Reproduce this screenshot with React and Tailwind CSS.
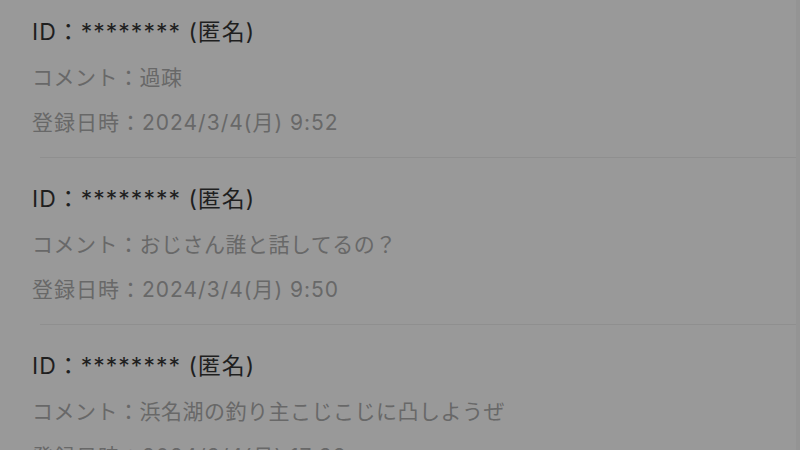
const comments = [
  { text: '過疎', date: '2024/3/4(月) 9:52' },
  { text: 'おじさん誰と話してるの？', date: '2024/3/4(月) 9:50' },
  { text: '浜名湖の釣り主こじこじに凸しようぜ', date: '2024/3/4(月) 17:38' },
]

export default function App() {
  return (
    <div
      className="w-[800px] h-[450px] overflow-hidden bg-[#999999] flex"
      style={{ fontFamily: 'Inter, "Noto Sans CJK JP", sans-serif' }}
    >
      <div className="flex-1 -mt-[9px]">
        {comments.map((c, i) => (
          <div key={i}>
            <div className="pl-8 pt-[19px] pb-[12px]">
              <div className="h-[45px] flex items-center text-[23px] tracking-[1px] text-[#1f1f1f]">
                ID：******** (匿名)
              </div>
              <div className="h-[45px] flex items-center text-[21px] tracking-[0.5px] text-[#686868]">
                コメント：{c.text}
              </div>
              <div className="h-[45px] flex items-center text-[21px] tracking-[1px] text-[#686868]">
                登録日時：{c.date}
              </div>
            </div>
            <div className="ml-10 h-px bg-[#8f8f8f]" />
          </div>
        ))}
      </div>
      <div className="w-[4px] bg-[#949494]" />
    </div>
  )
}
